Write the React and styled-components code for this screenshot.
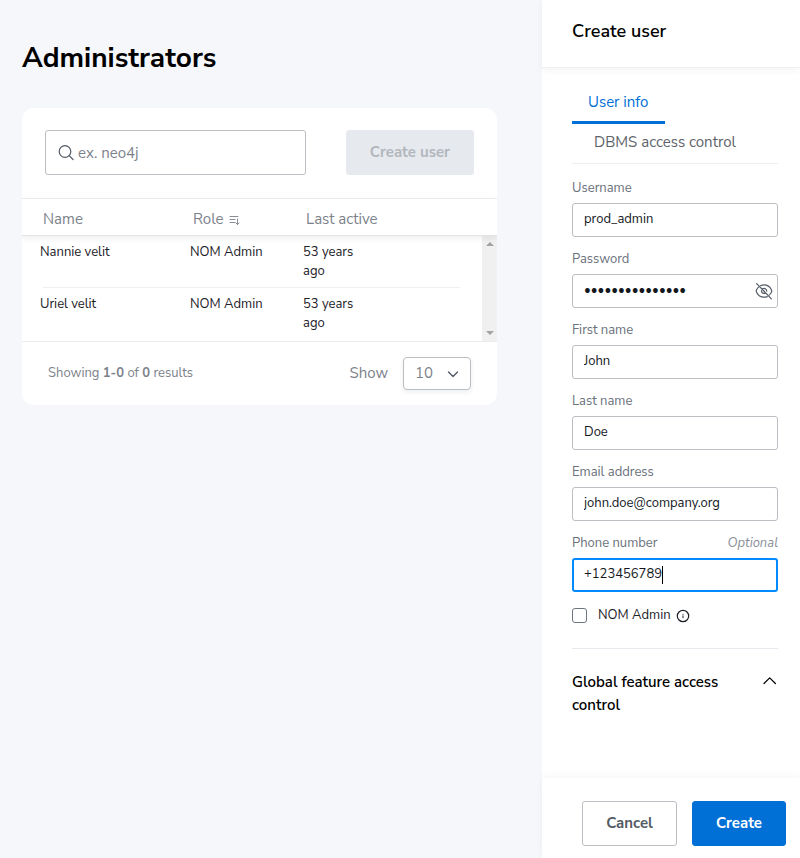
import React, { useState } from 'react';
import styled, { createGlobalStyle, css } from 'styled-components';

const GlobalStyle = createGlobalStyle`
  *, *::before, *::after { box-sizing: border-box; }
  body {
    margin: 0;
    background: #f5f7fb;
    color: #1c2128;
    font-family: "Nunito Sans", "Noto Sans", sans-serif;
    font-size: 13px;
    line-height: 19px;
  }
  button, input, select { font: inherit; color: inherit; margin: 0; }
  h1, h2, h3, p { margin: 0; }
`;

const Layout = styled.div`
  display: grid;
  grid-template-columns: minmax(0, 1fr) 258px;
  min-height: 100vh;
`;

const Main = styled.main`
  padding: 39px 45px 38px 22px;
`;

const PageTitle = styled.h1`
  color: #000;
  font-size: 28px;
  line-height: 38px;
  font-weight: 700;
`;

const Card = styled.section`
  margin-top: 31px;
  background: #fff;
  border-radius: 12px;
  overflow: hidden;
`;

const Toolbar = styled.div`
  display: flex;
  justify-content: space-between;
  gap: 40px;
  padding: 22px 23px 23px;
`;

const SearchBox = styled.label`
  flex: 1;
  min-width: 0;
  display: flex;
  align-items: center;
  gap: 3px;
  height: 45px;
  padding: 0 12px;
  border: 1px solid #bbbec3;
  border-radius: 3px;
  color: #535b66;
`;

const SearchInput = styled.input`
  flex: 1;
  min-width: 0;
  padding: 1px 0 0;
  border: 0;
  outline: 0;
  background: none;
  font-size: 15px;
  &::placeholder { color: #7c828b; opacity: 1; }
`;

const variants = {
  primary: css`background: #006fd6; border-color: #006fd6; color: #fff;`,
  outline: css`background: #fff; border-color: #bbbec3; color: #535b66;`,
  disabled: css`background: #e6e9ee; border-color: #e6e9ee; color: #b2b7bd;`,
};

const Button = styled.button`
  height: 45px;
  padding: 0 23px;
  border: 1px solid;
  border-radius: 3px;
  font-size: 15px;
  font-weight: 700;
  white-space: nowrap;
  ${({ $variant }) => variants[$variant]}
`;

const TableArea = styled.div`
  display: grid;
  grid-template-columns: minmax(0, 1fr) 15px;
  grid-template-rows: 37px auto;
  border-top: 1px solid #eceef1;
  border-bottom: 1px solid #e9ebee;
`;

const Table = styled.table`
  grid-area: 1 / 1 / -1 / -1;
  display: block;
`;

const TableHead = styled.thead`
  display: block;
  position: relative;
  border-bottom: 1px solid #e2e4e8;
  box-shadow: 0 2px 6px rgba(12, 26, 37, 0.08);
`;

const TableBody = styled.tbody`
  display: block;
  padding-bottom: 1px;
`;

const columns = css`
  display: grid;
  grid-template-columns: 150px 113px 76px;
`;

const HeadRow = styled.tr`
  ${columns}
  padding-left: 21px;
`;

const HeadCell = styled.th`
  display: flex;
  align-items: center;
  gap: 5px;
  height: 36px;
  padding: 5px 0 0;
  color: #7c828b;
  font-size: 15px;
  font-weight: 400;
  white-space: nowrap;
`;

const Row = styled.tr`
  ${columns}
  padding-left: 18px;
  &::after {
    content: "";
    grid-column: 1 / -1;
    width: 417px;
    max-width: calc(100vw - 383px);
    height: 1px;
    margin-left: 3px;
    background: #eff0f2;
  }
  &:last-child::after { background: transparent; }
`;

const Cell = styled.td`
  padding: 7px 16px 6px 0;
`;

const Scrollbar = styled.div`
  grid-area: 2 / 2;
  display: flex;
  flex-direction: column;
  justify-content: space-between;
  align-items: center;
  padding: 6px 0;
  background: #f0f0f0;
`;

const CardFooter = styled.div`
  display: flex;
  align-items: center;
  padding: 15px 26px;
  color: #7c828b;
`;

const ShowLabel = styled.label`
  margin: 0 15px 0 auto;
  font-size: 15px;
`;

const SelectWrap = styled.div`
  display: grid;
  align-items: center;
  width: 68px;
  height: 33px;
  & > * { grid-area: 1 / 1; }
  & > svg { justify-self: end; margin-right: 12px; color: #535b66; pointer-events: none; }
`;

const Select = styled.select`
  height: 33px;
  padding: 0 11px;
  appearance: none;
  background: #fff;
  border: 1px solid #bbbec3;
  border-radius: 4px;
  box-shadow: 0 2px 5px rgba(12, 26, 37, 0.08);
  font-size: 15px;
`;

const Panel = styled.aside`
  display: flex;
  flex-direction: column;
  background: #fff;
`;

const PanelHeader = styled.header`
  padding: 19px 30px 24px;
  border-bottom: 1px solid #eeeff1;
  box-shadow: 0 2px 8px rgba(12, 26, 37, 0.05);
`;

const PanelTitle = styled.h2`
  color: #000;
  font-size: 18px;
  line-height: 24px;
  font-weight: 600;
`;

const PanelBody = styled.form`
  flex: 1;
  padding: 12px 22px 24px 30px;
`;

const Tabs = styled.div`
  display: flex;
  flex-direction: column;
  align-items: flex-start;
  margin-bottom: 15px;
  border-bottom: 1px solid #eceef1;
`;

const Tab = styled.button`
  border: 0;
  background: none;
  font-size: 15px;
  white-space: nowrap;
  ${({ $active }) => $active
    ? css`
        height: 44px;
        padding: 4px 17px 0 16px;
        border-bottom: 3px solid #006fd6;
        border-radius: 2px 2px 0 0;
        color: #006fd6;
      `
    : css`
        height: 39px;
        padding: 0 22px 2px;
        color: #5e636a;
      `}
`;

const Field = styled.div`
  display: flex;
  flex-direction: column;
  gap: 5px;
  margin-bottom: 13px;
`;

const FieldHead = styled.div`
  display: flex;
  justify-content: space-between;
  color: #6a717b;
`;

const Optional = styled.em`
  color: #8a9099;
`;

const InputBox = styled.div`
  display: flex;
  align-items: center;
  height: 34px;
  padding: 0 4px 0 ${({ $focused }) => ($focused ? '10px' : '11px')};
  border: ${({ $focused }) => ($focused ? '2px solid #018bff' : '1px solid #bbbec3')};
  border-radius: 3px;
`;

const TextInput = styled.input`
  min-width: 0;
  padding: 0 0 2px;
  border: 0;
  outline: 0;
  background: none;
  color: #14181d;
  ${({ $fit }) => ($fit ? css`field-sizing: content; caret-color: transparent;` : css`flex: 1;`)}
`;

const Caret = styled.span`
  width: 1px;
  height: 18px;
  background: #000;
`;

const IconButton = styled.button`
  display: flex;
  padding: 0;
  border: 0;
  background: none;
  color: #535b66;
`;

const CheckRow = styled.label`
  display: flex;
  align-items: center;
  gap: 5px;
  padding: 1px 0 23px;
  border-bottom: 1px solid #e6e9ee;
`;

const Checkbox = styled.input`
  appearance: none;
  width: 15px;
  height: 15px;
  margin-right: 6px;
  border: 1px solid #6f757e;
  border-radius: 3px;
  &:checked { background: #006fd6; border-color: #006fd6; }
`;

const Accordion = styled.button`
  display: flex;
  align-items: flex-start;
  justify-content: space-between;
  width: 100%;
  padding: 22px 0 0;
  border: 0;
  background: none;
  color: #000;
  font-size: 15px;
  line-height: 23px;
  font-weight: 600;
  text-align: left;
  & > span { max-width: 170px; }
  & > svg { margin-top: 2px; }
`;

const PanelFooter = styled.footer`
  display: flex;
  justify-content: flex-end;
  gap: 15px;
  padding: 23px 14px 12px;
  box-shadow: 0 -2px 8px rgba(12, 26, 37, 0.04);
`;

const Svg = ({ size = 16, w, h, box = '0 0 16 16', children }) => (
  <svg width={w || size} height={h || size} viewBox={box} fill="none" stroke="currentColor"
    strokeWidth="1.2" strokeLinecap="round" strokeLinejoin="round" aria-hidden="true">
    {children}
  </svg>
);

const SearchIcon = () => (
  <Svg size={17} box="0 0 17 17"><circle cx="7" cy="7.5" r="5.8" /><path d="M11.2 11.7 15 15.5" /></Svg>
);
const SortIcon = () => (
  <Svg w={12} h={12} box="0 0 12 12"><path d="M1 2.500h8M1 5.500h5M1 8.500h5M8.500 5v5.500M6.900 8.900l1.600 1.600 1.600-1.600" strokeWidth="0.9" /></Svg>
);
const EyeOffIcon = () => (
  <Svg size={18} box="0 0 18 18">
    <path d="M5.6 3.7C6.700 3.100 7.800 2.800 9 2.800c3.500 0 6.200 2.300 7.400 4.900.4.800.4 1.800 0 2.600-.5 1-1.100 1.900-1.900 2.600M12.300 14.600c-1 .4-2.100.6-3.300.6-3.500 0-6.200-2.300-7.400-4.900-.4-.8-.4-1.800 0-2.600.5-1 1.200-1.900 2-2.600" />
    <path d="M7.500 6.800c2-1.100 4.200.3 4.200 2.300M10.300 11.200c-2 .8-3.900-.6-3.800-2.500M8.700 8.600l.7.700M1.600 1.600l14.800 15.200" />
  </Svg>
);
const InfoIcon = () => (
  <Svg size={14} box="0 0 14 14"><circle cx="7" cy="7" r="5.700" /><path d="M7 6.800v2M7 5.200v.1" strokeWidth="1" /></Svg>
);

const users = [
  { name: 'Nannie velit', role: 'NOM Admin', active: '53 years ago' },
  { name: 'Uriel velit', role: 'NOM Admin', active: '53 years ago' },
];

const fields = [
  { id: 'username', label: 'Username', value: 'prod_admin' },
  { id: 'password', label: 'Password', value: 'secretpassword1', type: 'password' },
  { id: 'first', label: 'First name', value: 'John' },
  { id: 'last', label: 'Last name', value: 'Doe' },
  { id: 'email', label: 'Email address', value: 'john.doe@company.org' },
  { id: 'phone', label: 'Phone number', value: '+123456789', optional: true, focused: true },
];

function FormField({ id, label, value, type = 'text', optional, focused }) {
  const [text, setText] = useState(value);
  return (
    <Field>
      <FieldHead>
        <label htmlFor={id}>{label}</label>
        {optional && <Optional>Optional</Optional>}
      </FieldHead>
      <InputBox $focused={focused}>
        <TextInput id={id} type={type} value={text} autoComplete="off" $fit={focused}
          onChange={(e) => setText(e.target.value)} />
        {focused && <Caret />}
        {type === 'password' && (
          <IconButton type="button" aria-label="Show password"><EyeOffIcon /></IconButton>
        )}
      </InputBox>
    </Field>
  );
}

export default function App() {
  return (
    <Layout>
      <GlobalStyle />
      <Main>
        <PageTitle>Administrators</PageTitle>
        <Card>
          <Toolbar>
            <SearchBox>
              <SearchIcon />
              <SearchInput type="search" placeholder="ex. neo4j" aria-label="Search administrators" />
            </SearchBox>
            <Button type="button" disabled $variant="disabled">Create user</Button>
          </Toolbar>
          <TableArea>
            <Table>
              <TableHead>
                <HeadRow>
                  <HeadCell>Name</HeadCell>
                  <HeadCell>Role <SortIcon /></HeadCell>
                  <HeadCell>Last active</HeadCell>
                </HeadRow>
              </TableHead>
              <TableBody>
                {users.map((u) => (
                  <Row key={u.name}>
                    <Cell>{u.name}</Cell>
                    <Cell>{u.role}</Cell>
                    <Cell>{u.active}</Cell>
                  </Row>
                ))}
              </TableBody>
            </Table>
            <Scrollbar aria-hidden="true">
              <svg width="8" height="4" viewBox="0 0 8 4"><path d="M4 0 8 4H0z" fill="#a3a3a3" /></svg>
              <svg width="8" height="4" viewBox="0 0 8 4"><path d="M4 4 8 0H0z" fill="#a3a3a3" /></svg>
            </Scrollbar>
          </TableArea>
          <CardFooter>
            <p>Showing <b>1-0</b> of <b>0</b> results</p>
            <ShowLabel htmlFor="page-size">Show</ShowLabel>
            <SelectWrap>
              <Select id="page-size" defaultValue="10">
                <option>10</option>
                <option>20</option>
                <option>50</option>
              </Select>
              <Svg w={12} h={8} box="0 0 12 8"><path d="M1.500 2 6 6.500 10.500 2" strokeWidth="1.400" /></Svg>
            </SelectWrap>
          </CardFooter>
        </Card>
      </Main>
      <Panel>
        <PanelHeader><PanelTitle>Create user</PanelTitle></PanelHeader>
        <PanelBody id="create-user" onSubmit={(e) => e.preventDefault()}>
          <Tabs role="tablist">
            <Tab type="button" role="tab" aria-selected="true" $active>User info</Tab>
            <Tab type="button" role="tab" aria-selected="false">DBMS access control</Tab>
          </Tabs>
          {fields.map((f) => <FormField key={f.id} {...f} />)}
          <CheckRow>
            <Checkbox type="checkbox" />
            NOM Admin <InfoIcon />
          </CheckRow>
          <Accordion type="button" aria-expanded="true">
            <span>Global feature access control</span>
            <Svg size={16} box="0 0 16 16"><path d="M2 10.500 7.700 4.900 13.400 10.500" /></Svg>
          </Accordion>
        </PanelBody>
        <PanelFooter>
          <Button type="button" $variant="outline">Cancel</Button>
          <Button type="submit" form="create-user" $variant="primary">Create</Button>
        </PanelFooter>
      </Panel>
    </Layout>
  );
}
